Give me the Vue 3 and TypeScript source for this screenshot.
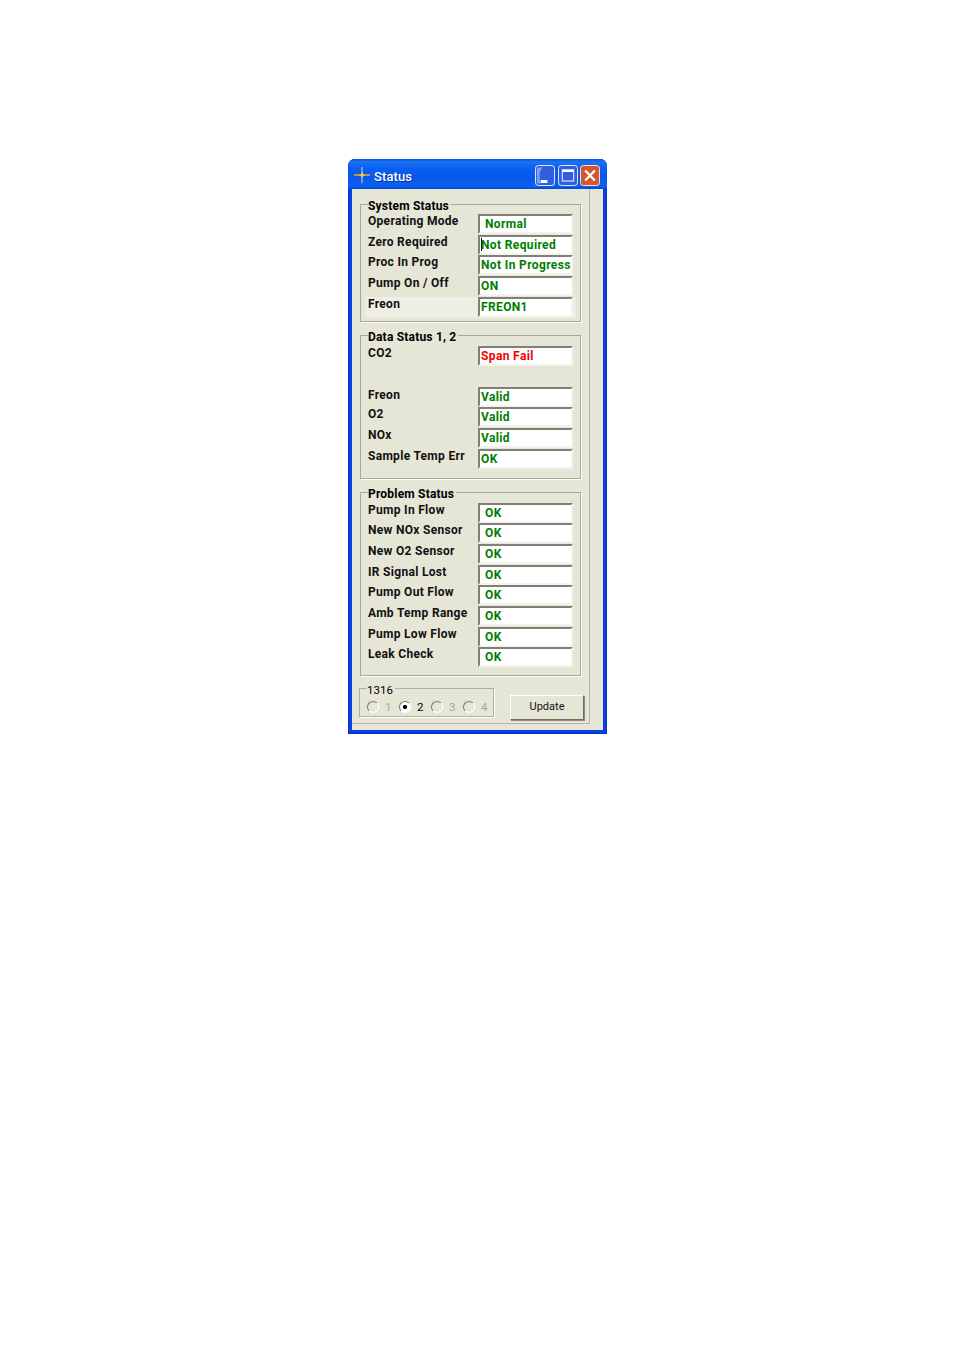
<script setup lang="ts">
interface Row {
  label: string
  value?: string
  tone?: 'ok' | 'bad'
  indent?: boolean
  caret?: boolean
  band?: boolean
  low?: boolean
}
interface Group {
  title: string
  rows: Row[]
}
const okRow = (label: string): Row => ({ label, value: 'OK', indent: true })
const groups: Group[] = [
  {
    title: 'System Status',
    rows: [
      { label: 'Operating Mode', value: 'Normal', indent: true },
      { label: 'Zero Required', value: 'Not Required', caret: true },
      { label: 'Proc In Prog', value: 'Not In Progress' },
      { label: 'Pump On / Off', value: 'ON' },
      { label: 'Freon', value: 'FREON1', band: true },
    ],
  },
  {
    title: 'Data Status 1, 2',
    rows: [
      { label: 'CO2', value: 'Span Fail', tone: 'bad' },
      { label: '' },
      { label: 'Freon', value: 'Valid', low: true },
      { label: 'O2', value: 'Valid' },
      { label: 'NOx', value: 'Valid' },
      { label: 'Sample Temp Err', value: 'OK' },
    ],
  },
  {
    title: 'Problem Status',
    rows: [
      okRow('Pump In Flow'),
      okRow('New NOx Sensor'),
      okRow('New O2 Sensor'),
      okRow('IR Signal Lost'),
      okRow('Pump Out Flow'),
      okRow('Amb Temp Range'),
      okRow('Pump Low Flow'),
      okRow('Leak Check'),
    ],
  },
]
const radios = [
  { n: '1', on: false },
  { n: '2', on: true },
  { n: '3', on: false },
  { n: '4', on: false },
]
</script>

<template>
  <div class="page">
    <section class="window">
      <header class="titlebar">
        <svg class="app-icon" viewBox="0 0 18 18" width="18" height="18">
          <path d="M9 1v16" stroke="#9db2d2" stroke-width="1.4" />
          <path d="M1 9h16" stroke="#f5a623" stroke-width="1.6" />
          <path d="M9 5.5 10 8 12.5 9 10 10 9 12.5 8 10 5.5 9 8 8Z" fill="#ffc93c" />
        </svg>
        <span class="title">Status</span>
        <div class="controls">
          <svg class="ctl" viewBox="0 0 21 21" width="20" height="21" preserveAspectRatio="none">
            <rect x=".5" y=".5" width="20" height="20" rx="3" fill="#2f5fe0" stroke="#e6ecff" />
            <path d="M8 2.5C4.5 5 4 12 6 18.5H3c-1 0-1-1-1-2V4c0-1 1-1.500 2-1.500Z" fill="#7fa3f2" />
            <path d="M6 15h7v3H6Z" fill="#fff" />
          </svg>
          <svg class="ctl" viewBox="0 0 21 21" width="20" height="21" preserveAspectRatio="none">
            <rect x=".5" y=".5" width="20" height="20" rx="3" fill="#2f5fe0" stroke="#e6ecff" />
            <rect x="4.500" y="5" width="12" height="11" fill="none" stroke="#fff" />
            <rect x="4.500" y="4.500" width="12" height="2.500" fill="#fff" />
          </svg>
          <svg class="ctl close" viewBox="0 0 21 21" width="20" height="21" preserveAspectRatio="none">
            <rect x=".5" y=".5" width="20" height="20" rx="3" fill="#d5552f" stroke="#f2e6e0" />
            <path d="M5.500 5.500l10 10M15.500 5.500l-10 10" stroke="#fff" stroke-width="2.400" />
          </svg>
        </div>
      </header>
      <div class="client">
        <div class="panel">
          <div v-for="g in groups" :key="g.title" class="group">
            <div class="legend">{{ g.title }}</div>
            <div class="rows">
              <div v-for="(r, i) in g.rows" :key="i" class="row" :class="{ band: r.band }">
                <span class="label" :class="{ low: r.low }">{{ r.label }}</span>
                <span v-if="r.value" class="value" :class="[r.tone, { indent: r.indent }]">
                  <i v-if="r.caret" class="caret"></i>{{ r.value }}
                </span>
              </div>
            </div>
          </div>
          <div class="footer">
            <div class="radio-group">
              <div class="legend plain">1316</div>
              <div class="radios">
                <label v-for="r in radios" :key="r.n" class="radio" :class="{ on: r.on }">
                  <i class="dot"></i>{{ r.n }}
                </label>
              </div>
            </div>
            <button class="update" type="button">Update</button>
          </div>
        </div>
      </div>
    </section>
  </div>
</template>

<style scoped>
.page {
  min-height: 1350px;
  box-sizing: border-box;
  padding: 159px 0 0 348px;
  background: #fff;
  font-family: Roboto, "Liberation Sans", Arial, sans-serif;
}
.window {
  width: 259px;
  height: 575px;
  box-sizing: border-box;
  display: flex;
  flex-direction: column;
  background: #0a3fe0;
  box-shadow: inset 0 0 0 1px #0a2fc0;
  border-radius: 7px 7px 0 0;
  overflow: hidden;
}
.titlebar {
  height: 30px;
  flex: none;
  display: flex;
  align-items: center;
  padding: 2px 7px 0 5px;
  box-sizing: border-box;
  background: linear-gradient(#0a55d8 0, #1a72f5 3px, #0a5ff0 9px, #0658ea 20px, #0a62f2 27px, #0544d0 30px);
}
.app-icon {
  flex: none;
}
.title {
  margin-left: 3px;
  padding-top: 3px;
  color: #fff;
  font-size: 13px;
  font-weight: 500;
  letter-spacing: 0.1px;
  text-shadow: 1px 1px 0 #0a2fa8;
}
.controls {
  margin-left: auto;
  display: flex;
  gap: 2.5px;
}
.ctl {
  display: block;
}
.client {
  flex: 1;
  margin: 0 4px 4px;
  background: #e6e6d7;
  padding-bottom: 6px;
  display: flex;
  min-height: 0;
}
.panel {
  width: 238px;
  box-sizing: border-box;
  border-right: 1px solid #b5b5a0;
  border-bottom: 1px solid #b5b5a0;
  padding: 15px 0 0 8px;
}
.group {
  width: 221px;
  box-sizing: border-box;
  border: 1px solid #a9a995;
  box-shadow: 1px 1px 0 #fff;
  padding: 0 7px 9px;
  margin-bottom: 13px;
}
.group:nth-child(1) {
  padding-bottom: 4px;
}
.group:nth-child(3) {
  padding-bottom: 8px;
}
.legend {
  width: fit-content;
  height: 13px;
  margin: -5px 0 2px;
  padding-right: 2px;
  background: #e6e6d7;
  color: #000;
  font-size: 12px;
  line-height: 13px;
  font-weight: bold;
  letter-spacing: 0.2px;
  white-space: nowrap;
}
.group:nth-child(1) .legend {
  margin-bottom: 1px;
}
.rows {
  display: grid;
  grid-auto-rows: 20px;
  row-gap: 0.65px;
}
.row {
  display: grid;
  grid-template-columns: 110px 95px;
  align-items: start;
}
.row.band {
  margin: 0 -3px -1px;
  padding: 0 3px 1px;
  background: #eeeee4;
}
.label {
  padding-top: 1px;
  font-size: 12px;
  line-height: 13px;
  font-weight: bold;
  letter-spacing: 0.3px;
  white-space: nowrap;
  color: #111;
}
.label.low {
  padding-top: 2px;
}
.value {
  height: 20px;
  box-sizing: border-box;
  display: block;
  border: 2px solid;
  border-color: #808076 #f4f4ee #f4f4ee #808076;
  background: #fff;
  color: #007d00;
  font-size: 12px;
  line-height: 16px;
  font-weight: bold;
  letter-spacing: 0.37px;
  padding-left: 1px;
  white-space: nowrap;
  overflow: hidden;
}
.value.indent {
  padding-left: 5px;
}
.value.bad {
  color: #f00000;
}
.caret {
  display: inline-block;
  width: 1px;
  height: 13px;
  margin-right: -1px;
  vertical-align: -2px;
  background: #000;
}
.footer {
  display: flex;
  align-items: flex-start;
  margin-top: -1px;
  margin-left: -1px;
}
.radio-group {
  width: 135px;
  height: 29px;
  box-sizing: border-box;
  border: 1px solid #b0b09c;
  box-shadow: 1px 1px 0 #fff;
  padding-left: 7px;
}
.legend.plain {
  font-weight: normal;
  font-size: 11.500px;
  letter-spacing: 0;
  margin-bottom: 0;
}
.radios {
  display: flex;
  gap: 10px;
  margin-top: 4px;
}
.radio {
  display: flex;
  align-items: center;
  gap: 6px;
  width: 22px;
  color: #aca899;
  font-size: 11.500px;
  line-height: 12px;
}
.radio.on {
  color: #000;
}
.dot {
  flex: none;
  width: 10px;
  height: 10px;
  border-radius: 50%;
  border: 1px solid #77776a;
  border-right-color: #fff;
  border-bottom-color: #fff;
  background: #e6e6d7;
}
.radio.on .dot {
  background: radial-gradient(circle, #000 0 1.800px, #fff 2.400px);
}
.update {
  width: 74px;
  height: 25px;
  margin: 7px 0 0 16px;
  padding: 0 0 2px;
  box-sizing: border-box;
  border: 1px solid;
  border-color: #fff #6e6e60 #6e6e60 #fff;
  box-shadow: 1px 1px 0 #8a8a7a;
  background: #e6e6d7;
  color: #111;
  font-family: inherit;
  font-size: 11px;
}
</style>
